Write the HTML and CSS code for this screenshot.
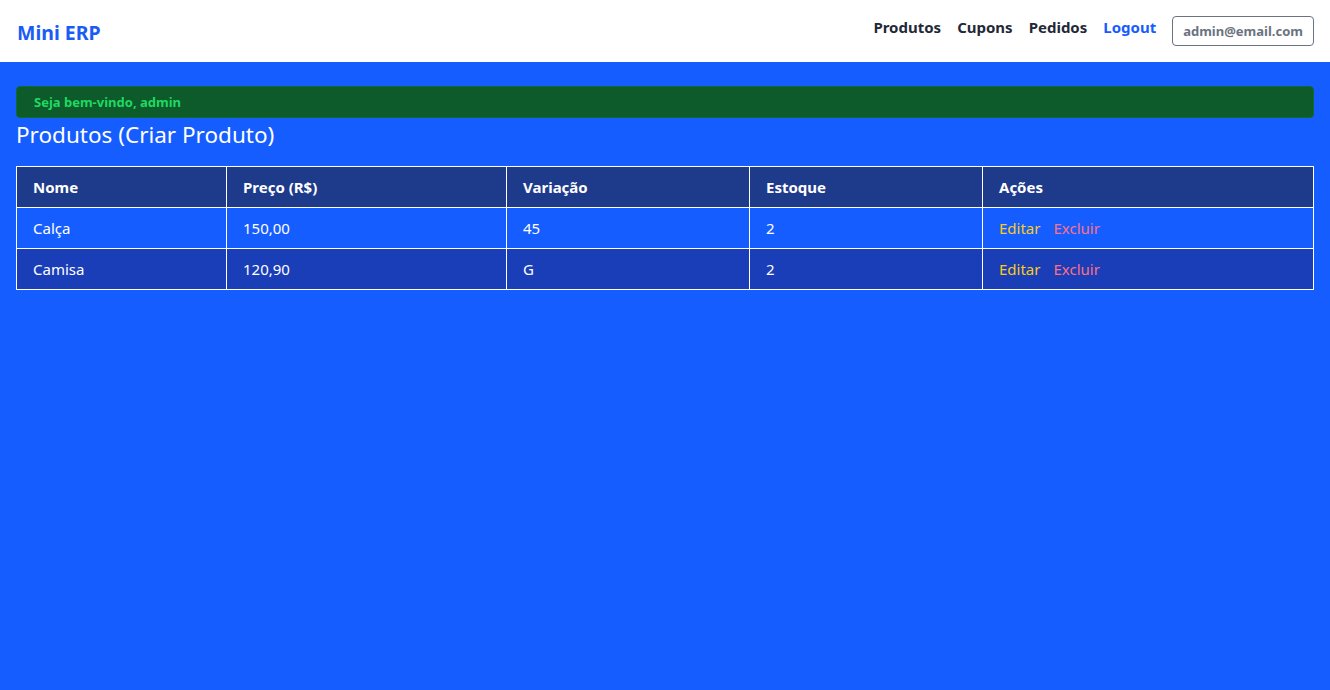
FILE: index.html
```html
<!DOCTYPE html>
<html lang="pt-BR">
<head>
<meta charset="utf-8">
<title>Mini ERP</title>
<link rel="stylesheet" href="styles.css">
</head>
<body>
<nav class="navbar">
  <a class="brand" href="#">Mini ERP</a>
  <div class="nav-right">
    <a class="nav-link" href="#">Produtos</a>
    <a class="nav-link" href="#">Cupons</a>
    <a class="nav-link" href="#">Pedidos</a>
    <a class="nav-link logout" href="#">Logout</a>
    <span class="user-badge">admin@email.com</span>
  </div>
</nav>
<main class="content">
  <div class="alert">Seja bem-vindo, admin</div>
  <h2 class="title">Produtos (Criar Produto)</h2>
  <table class="table">
    <thead>
      <tr>
        <th class="c-nome">Nome</th>
        <th class="c-preco">Preço (R$)</th>
        <th class="c-var">Variação</th>
        <th class="c-est">Estoque</th>
        <th class="c-acoes">Ações</th>
      </tr>
    </thead>
    <tbody>
      <tr>
        <td>Calça</td>
        <td>150,00</td>
        <td>45</td>
        <td>2</td>
        <td><a class="act edit" href="#">Editar</a><a class="act del" href="#">Excluir</a></td>
      </tr>
      <tr class="alt">
        <td>Camisa</td>
        <td>120,90</td>
        <td>G</td>
        <td>2</td>
        <td><a class="act edit" href="#">Editar</a><a class="act del" href="#">Excluir</a></td>
      </tr>
    </tbody>
  </table>
</main>
</body>
</html>
```
FILE: styles.css
```css
* { box-sizing: border-box; }
html, body { height: 100%; }
body {
  margin: 0;
  font-family: "Noto Sans", "Open Sans", sans-serif;
  background: #165dff;
  color: #fff;
}
a { text-decoration: none; }
.navbar {
  height: 62px;
  background: #fff;
  display: flex;
  align-items: center;
  justify-content: space-between;
  padding: 0 17px;
}
.brand {
  color: #1a5cf5;
  font-weight: 700;
  font-size: 19.5px;
  margin-top: 2px;
}
.nav-right {
  display: flex;
  align-items: center;
  gap: 16px;
}
.nav-link {
  color: #1f2937;
  font-weight: 700;
  font-size: 15px;
  margin-top: -8px;
}
.nav-link.logout { color: #165dff; }
.user-badge {
  border: 1px solid #6b7280;
  border-radius: 4px;
  color: #6b7280;
  font-weight: 700;
  font-size: 13px;
  height: 30px;
  padding: 0 10px;
  display: flex;
  align-items: center;
  margin-right: -1px;
}
.content { padding: 24px 16px; }
.alert {
  background: #0d5a2b;
  border: 1px solid #0e6a32;
  border-radius: 4px;
  color: #1fd962;
  font-weight: 700;
  font-size: 13px;
  height: 32px;
  display: flex;
  align-items: center;
  padding: 0 17px;
}
.title {
  margin: 1px 0 15px;
  font-weight: 400;
  font-size: 22.5px;
  line-height: 32px;
}
.table {
  width: 100%;
  border-collapse: collapse;
  table-layout: fixed;
  font-size: 15px;
}
.table th, .table td {
  border: 1px solid #fff;
  padding: 8px 16px;
  height: 41px;
  text-align: left;
  line-height: 24px;
}
.table th { background: #1e3a8a; font-weight: 700; }
.table tr.alt td { background: #1a3db8; }
.c-nome { width: 210px; }
.c-preco { width: 280px; }
.c-var { width: 243px; }
.c-est { width: 233px; }
.act { margin-right: 13px; }
.edit { color: #facc15; }
.del { color: #fb7185; }
```
